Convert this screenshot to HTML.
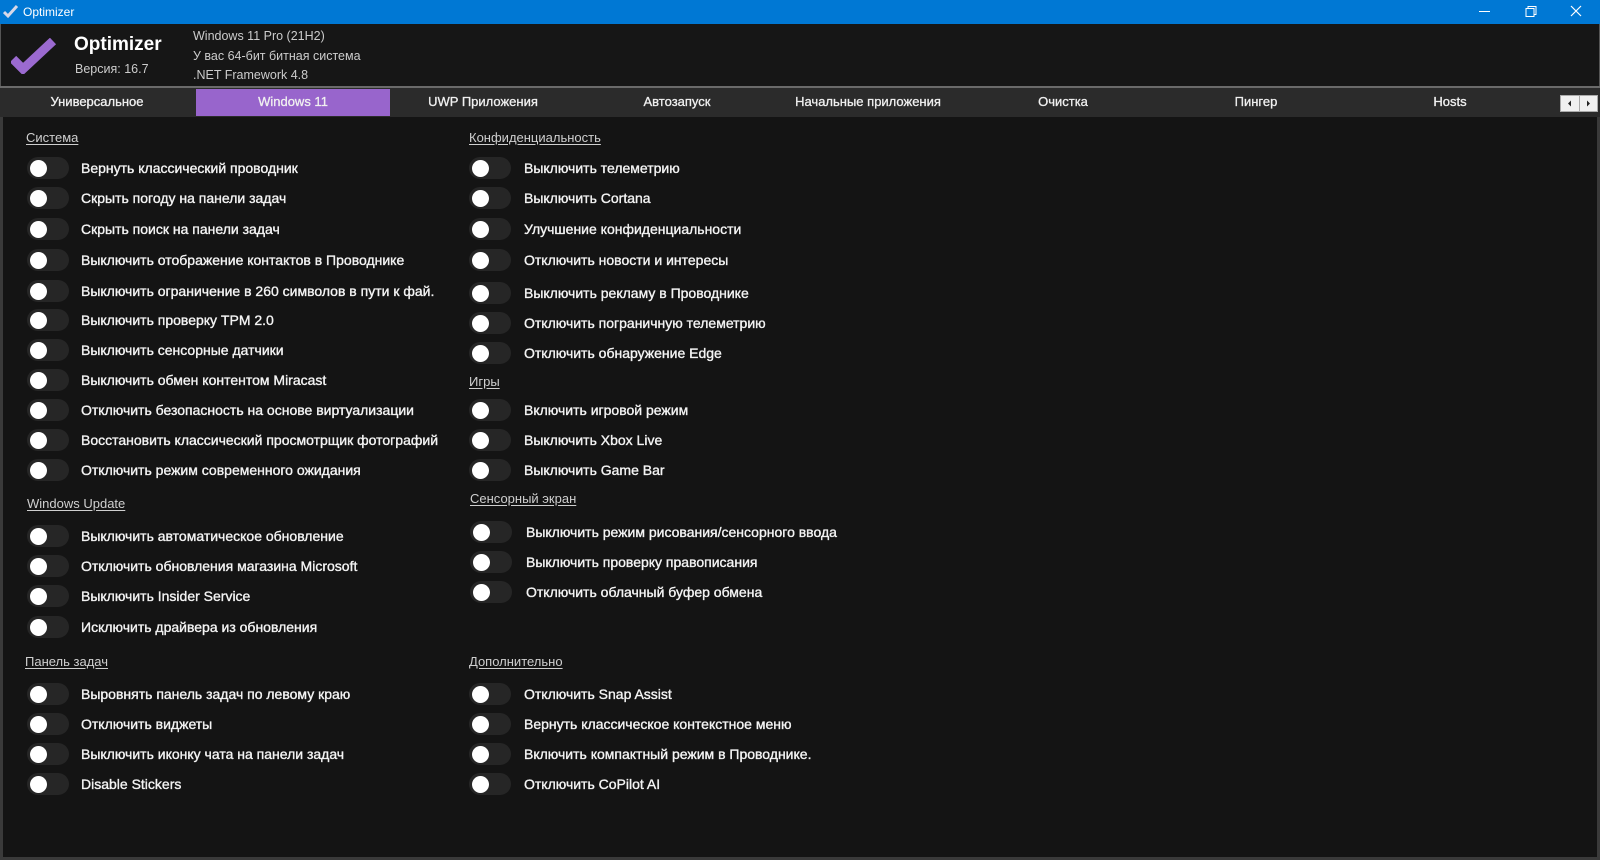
<!DOCTYPE html>
<html><head><meta charset="utf-8"><style>
*{margin:0;padding:0;box-sizing:border-box}
body{width:1600px;height:860px;background:#141414;font-family:"Liberation Sans","DejaVu Sans",sans-serif;color:#f2f2f2;position:relative;overflow:hidden}
.a{position:absolute;white-space:nowrap}
.tb{left:0;top:0;width:1600px;height:24px;background:#0078d4;color:#fff;font-size:12px}
.hdr{left:0;top:24px;width:1600px;height:62px;background:#161616;border-left:1px solid #555;border-right:1px solid #555}
.tabs{left:0;top:86px;width:1600px;height:31px;background:#2b2b2b;border-top:2px solid #6a6a6a}
.tab{top:0;height:29px;line-height:27px;font-size:13px;text-align:center;width:194px;color:#f0f0f0;-webkit-text-stroke:0.3px #f0f0f0}
.frame{left:0;top:117px;width:1600px;height:743px;border:3px solid #3a3a3a;border-top:none;background:#141414}
.h{font-size:13px;color:#cfcfcf;text-decoration:underline;text-underline-offset:2px}
.t{width:42px;height:22px;border-radius:11px;background:#262626}
.t::after{content:"";position:absolute;left:3px;top:2.5px;width:17px;height:17px;border-radius:50%;background:#fff}
.l{font-size:14px;color:#f4f4f4;line-height:16px;-webkit-text-stroke:0.35px #f4f4f4}
</style></head><body>
<div class="a tb">
<svg class="a" style="left:3px;top:4px" width="16" height="15" viewBox="0 0 16 15"><path d="M1 8l4 4 9-10" stroke="#d8d8e8" stroke-width="3" fill="none"/></svg>
<span class="a" style="left:23px;top:5px">Optimizer</span>
<svg class="a" style="left:1475px;top:0" width="125" height="24"><path d="M4 11.5h11" stroke="#fff"/><path d="M51 8.5h8v8h-8zM53 8.5v-2h8v8h-2" stroke="#fff" fill="none"/><path d="M96 6l10 10M106 6l-10 10" stroke="#fff" stroke-width="1.2"/></svg>
</div>
<div class="a hdr">
<svg class="a" style="left:10px;top:14px" width="46" height="36" viewBox="0 0 46 36"><path d="M2 21l10 10 L42 3" stroke="#9b6ad0" stroke-width="9" fill="none"/></svg>
<span class="a" style="left:73px;top:10px;font-size:19px;font-weight:bold;color:#fff">Optimizer</span>
<span class="a" style="left:74px;top:38px;font-size:12.5px;color:#ccc">Версия: 16.7</span>
<span class="a" style="left:192px;top:5px;font-size:12.5px;color:#ccc">Windows 11 Pro (21H2)</span>
<span class="a" style="left:192px;top:25px;font-size:12.5px;color:#ccc">У вас 64-бит битная система</span>
<span class="a" style="left:192px;top:44px;font-size:12.5px;color:#ccc">.NET Framework 4.8</span>
</div>
<div class="a tabs">
<div class="a tab" style="left:0">Универсальное</div>
<div class="a tab" style="left:196px;background:#9865cc;height:27px;top:1px;line-height:25px">Windows 11</div>
<div class="a tab" style="left:386px">UWP Приложения</div>
<div class="a tab" style="left:580px">Автозапуск</div>
<div class="a tab" style="left:771px">Начальные приложения</div>
<div class="a tab" style="left:966px">Очистка</div>
<div class="a tab" style="left:1159px">Пингер</div>
<div class="a tab" style="left:1353px">Hosts</div>
<div class="a" style="left:1560px;top:7px;width:38px;height:17px;background:#f0f0f0;border:1px solid #aaa"><div class="a" style="left:18px;top:0;width:1px;height:15px;background:#aaa"></div><svg class="a" style="left:0;top:0" width="36" height="15"><path d="M7 7.5l3-3v6z M29 7.5l-3-3v6z" fill="#222"/></svg></div>
</div>
<div class="a frame"></div>

<div class="a h" style="left:26px;top:130px">Система</div>
<div class="a h" style="left:469px;top:130px">Конфиденциальность</div>
<div class="a h" style="left:27px;top:496px">Windows Update</div>
<div class="a h" style="left:25px;top:654px">Панель задач</div>
<div class="a h" style="left:469px;top:374px">Игры</div>
<div class="a h" style="left:470px;top:491px">Сенсорный экран</div>
<div class="a h" style="left:469px;top:654px">Дополнительно</div>

<div class="a t" style="left:27px;top:157px"></div><div class="a l" style="left:81px;top:160px">Вернуть классический проводник</div>
<div class="a t" style="left:27px;top:187px"></div><div class="a l" style="left:81px;top:190px">Скрыть погоду на панели задач</div>
<div class="a t" style="left:27px;top:218px"></div><div class="a l" style="left:81px;top:221px">Скрыть поиск на панели задач</div>
<div class="a t" style="left:27px;top:249px"></div><div class="a l" style="left:81px;top:252px">Выключить отображение контактов в Проводнике</div>
<div class="a t" style="left:27px;top:280px"></div><div class="a l" style="left:81px;top:283px">Выключить ограничение в 260 символов в пути к фай.</div>
<div class="a t" style="left:27px;top:309px"></div><div class="a l" style="left:81px;top:312px">Выключить проверку TPM 2.0</div>
<div class="a t" style="left:27px;top:339px"></div><div class="a l" style="left:81px;top:342px">Выключить сенсорные датчики</div>
<div class="a t" style="left:27px;top:369px"></div><div class="a l" style="left:81px;top:372px">Выключить обмен контентом Miracast</div>
<div class="a t" style="left:27px;top:399px"></div><div class="a l" style="left:81px;top:402px">Отключить безопасность на основе виртуализации</div>
<div class="a t" style="left:27px;top:429px"></div><div class="a l" style="left:81px;top:432px">Восстановить классический просмотрщик фотографий</div>
<div class="a t" style="left:27px;top:459px"></div><div class="a l" style="left:81px;top:462px">Отключить режим современного ожидания</div>

<div class="a t" style="left:27px;top:525px"></div><div class="a l" style="left:81px;top:528px">Выключить автоматическое обновление</div>
<div class="a t" style="left:27px;top:555px"></div><div class="a l" style="left:81px;top:558px">Отключить обновления магазина Microsoft</div>
<div class="a t" style="left:27px;top:585px"></div><div class="a l" style="left:81px;top:588px">Выключить Insider Service</div>
<div class="a t" style="left:27px;top:616px"></div><div class="a l" style="left:81px;top:619px">Исключить драйвера из обновления</div>

<div class="a t" style="left:27px;top:683px"></div><div class="a l" style="left:81px;top:686px">Выровнять панель задач по левому краю</div>
<div class="a t" style="left:27px;top:713px"></div><div class="a l" style="left:81px;top:716px">Отключить виджеты</div>
<div class="a t" style="left:27px;top:743px"></div><div class="a l" style="left:81px;top:746px">Выключить иконку чата на панели задач</div>
<div class="a t" style="left:27px;top:773px"></div><div class="a l" style="left:81px;top:776px">Disable Stickers</div>

<div class="a t" style="left:469px;top:157px"></div><div class="a l" style="left:524px;top:160px">Выключить телеметрию</div>
<div class="a t" style="left:469px;top:187px"></div><div class="a l" style="left:524px;top:190px">Выключить Cortana</div>
<div class="a t" style="left:469px;top:218px"></div><div class="a l" style="left:524px;top:221px">Улучшение конфиденциальности</div>
<div class="a t" style="left:469px;top:249px"></div><div class="a l" style="left:524px;top:252px">Отключить новости и интересы</div>
<div class="a t" style="left:469px;top:282px"></div><div class="a l" style="left:524px;top:285px">Выключить рекламу в Проводнике</div>
<div class="a t" style="left:469px;top:312px"></div><div class="a l" style="left:524px;top:315px">Отключить пограничную телеметрию</div>
<div class="a t" style="left:469px;top:342px"></div><div class="a l" style="left:524px;top:345px">Отключить обнаружение Edge</div>

<div class="a t" style="left:469px;top:399px"></div><div class="a l" style="left:524px;top:402px">Включить игровой режим</div>
<div class="a t" style="left:469px;top:429px"></div><div class="a l" style="left:524px;top:432px">Выключить Xbox Live</div>
<div class="a t" style="left:469px;top:459px"></div><div class="a l" style="left:524px;top:462px">Выключить Game Bar</div>

<div class="a t" style="left:470px;top:521px"></div><div class="a l" style="left:526px;top:524px">Выключить режим рисования/сенсорного ввода</div>
<div class="a t" style="left:470px;top:551px"></div><div class="a l" style="left:526px;top:554px">Выключить проверку правописания</div>
<div class="a t" style="left:470px;top:581px"></div><div class="a l" style="left:526px;top:584px">Отключить облачный буфер обмена</div>

<div class="a t" style="left:469px;top:683px"></div><div class="a l" style="left:524px;top:686px">Отключить Snap Assist</div>
<div class="a t" style="left:469px;top:713px"></div><div class="a l" style="left:524px;top:716px">Вернуть классическое контекстное меню</div>
<div class="a t" style="left:469px;top:743px"></div><div class="a l" style="left:524px;top:746px">Включить компактный режим в Проводнике.</div>
<div class="a t" style="left:469px;top:773px"></div><div class="a l" style="left:524px;top:776px">Отключить CoPilot AI</div>
</body></html>
